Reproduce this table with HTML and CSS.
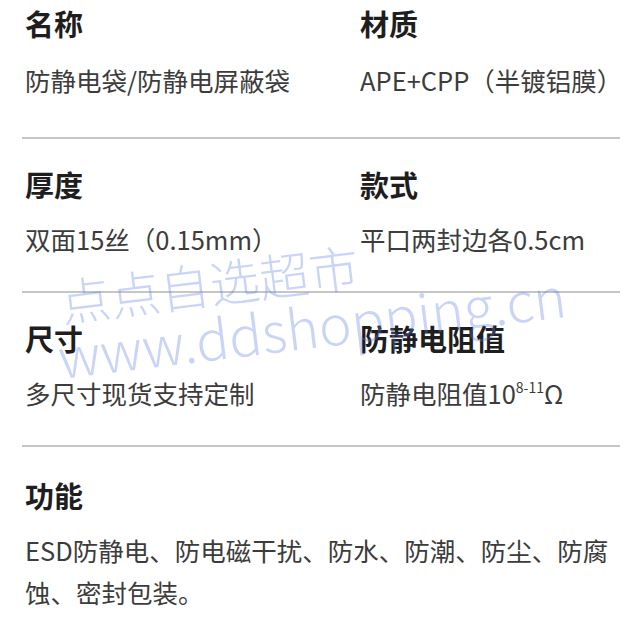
FILE: index.html
```html
<!DOCTYPE html>
<html lang="zh-CN">
<head>
  <meta charset="UTF-8" />
  <meta name="viewport" content="width=device-width, initial-scale=1.0" />
  <title>产品参数</title>
  <link rel="stylesheet" href="styles.css">
</head>
<body>

  <div class="spec">

    <!-- 名称 / 材质 -->
    <div class="spec-row first">
      <div class="cell">
        <h3>名称</h3>
        <p>防静电袋/防静电屏蔽袋</p>
      </div>
      <div class="cell">
        <h3>材质</h3>
        <p>APE+CPP（半镀铝膜）</p>
      </div>
    </div>

    <!-- 厚度 / 款式 -->
    <div class="spec-row">
      <div class="cell">
        <h3>厚度</h3>
        <p>双面15丝（0.15mm）</p>
      </div>
      <div class="cell">
        <h3>款式</h3>
        <p>平口两封边各0.5cm</p>
      </div>
    </div>

    <!-- 尺寸 / 防静电阻值 -->
    <div class="spec-row">
      <div class="cell">
        <h3>尺寸</h3>
        <p>多尺寸现货支持定制</p>
      </div>
      <div class="cell">
        <h3>防静电阻值</h3>
        <p>防静电阻值10<sup>8-11</sup>Ω</p>
      </div>
    </div>

    <!-- 功能 -->
    <div class="spec-row full">
      <div class="cell">
        <h3>功能</h3>
        <p>ESD防静电、防电磁干扰、防水、防潮、防尘、防腐蚀、密封包装。</p>
      </div>
    </div>

  </div>

  <div class="mark mark-cn">点点自选超市</div>
  <div class="mark mark-en">www.ddshopping.cn</div>

</body>
</html>
```

FILE: styles.css
```css
 body {
   font-family: "Noto Sans CJK SC", "Noto Sans", sans-serif;
   margin: 0;
   padding: 0;
   background: #fff;
   color: #222;
   position: relative;
   overflow: hidden;
 }
 .spec {
   padding: 0 4px 0 22px;
 }
 .spec-row {
   display: grid;
   grid-template-columns: 335px 1fr;
   padding: 25px 0 31px;
   border-bottom: 2px solid #c6c6c6;
 }
 .spec-row.first {
   padding-top: 3px;
   padding-bottom: 36px;
 }
 .spec-row.full {
   grid-template-columns: 1fr;
   border-bottom: none;
   padding-top: 28px;
 }
 .cell {
   padding-left: 3px;
 }
 .cell h3 {
   margin: 0 0 14px;
   font-size: 29px;
   line-height: 40px;
   font-weight: bold;
   color: #1e1e1e;
 }
 .spec-row.first .cell h3 {
   margin-bottom: 16px;
 }
 .cell p {
   margin: 0;
   font-size: 25.5px;
   line-height: 42px;
   color: #3c3c3c;
 }
 .cell sup {
   font-size: 14px;
   line-height: 0;
   vertical-align: 11px;
 }

 /* watermark */
 .mark {
   position: absolute;
   left: 0;
   top: 0;
   white-space: nowrap;
   font-weight: 300;
   color: rgba(90, 120, 230, 0.32);
   transform-origin: 0 100%;
   transform: rotate(-7deg);
   pointer-events: none;
 }
 .mark-cn {
   left: 64px;
   top: 270px;
   font-size: 50px;
   line-height: 60px;
 }
 .mark-en {
   left: 62px;
   top: 322px;
   font-size: 55px;
   line-height: 66px;
 }
```
